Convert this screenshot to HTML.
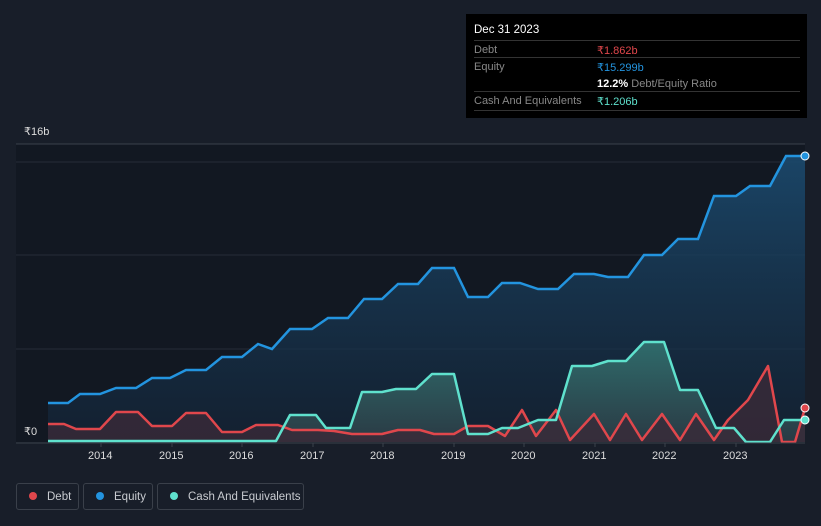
<!DOCTYPE html>
<html><head><style>
body{margin:0;width:821px;height:526px;background:#181e29;font-family:"Liberation Sans",sans-serif;overflow:hidden;position:relative}
.tip{position:absolute;left:466px;top:14px;width:341px;height:104px;background:#000;font-size:11px;color:#888}
.row{position:absolute;left:8px;width:326px;border-top:1px solid #333}
.lg{position:absolute;top:483px;height:27px;border:1px solid #3a404a;border-radius:3px;color:#c8cbd0;font-size:11.5px;line-height:27px;box-sizing:border-box}
.lg i{display:inline-block;width:8px;height:8px;border-radius:50%;margin:0 10px 0 12px}
.ax{position:absolute;top:450px;color:#ddd;font-size:11px}
</style></head><body>
<svg width="821" height="526" style="position:absolute;left:0;top:0">
<defs>
<linearGradient id="ge" x1="0" y1="0" x2="0" y2="1"><stop offset="0" stop-color="#1b4a6e" stop-opacity=".9"/><stop offset="1" stop-color="#14263a" stop-opacity=".6"/></linearGradient>
<linearGradient id="gc" x1="0" y1="0" x2="0" y2="1"><stop offset="0" stop-color="#2f6b6b"/><stop offset="1" stop-color="#2a3a44"/></linearGradient>
</defs>
<rect x="16" y="144" width="789" height="298" fill="#121822"/>
<line x1="16" y1="144" x2="805" y2="144" stroke="#3a414c"/>
<line x1="16" y1="162" x2="805" y2="162" stroke="#262d38"/>
<line x1="16" y1="255" x2="805" y2="255" stroke="#262d38"/>
<line x1="16" y1="349" x2="805" y2="349" stroke="#262d38"/>
<path fill="url(#ge)" d="M48,403 L68,403 80,394 100,394 116,388 136,388 152,378 170,378 186,370 206,370 222,357 242,357 258,344 272,349 290,329 312,329 328,318 348,318 364,299 382,299 398,284 418,284 432,268 454,268 468,297 488,297 502,283 520,283 538,289 558,289 574,274 594,274 608,277 628,277 644,255 662,255 678,239 698,239 714,196 736,196 750,186 770,186 786,156 805,156 L805,442 L48,442Z"/>
<path fill="url(#gc)" d="M48,441 L276,441 290,415 316,415 326,428 350,428 362,392 382,392 396,389 416,389 432,374 454,374 468,434 488,434 502,428 518,428 538,420 556,420 572,366 592,366 608,361 626,361 644,342 664,342 680,390 698,390 716,428 734,428 746,442 770,442 784,420 805,420 L805,442 48,442Z"/>
<path fill="#3a2a38" opacity=".8" d="M48,424 L64,424 76,429 100,429 116,412 138,412 152,426 172,426 186,413 206,413 222,432 242,432 256,425 278,425 292,430 318,430 334,431 352,434 382,434 398,430 420,430 434,434 454,434 468,426 488,426 505,436 522,410 536,436 556,410 570,440 594,414 610,440 626,414 642,440 662,414 680,440 696,414 714,440 728,420 748,400 768,366 782,442 795,442 805,408 L805,442 48,442Z"/>
<path fill="none" stroke="#2394df" stroke-width="2.5" d="M48,403 L68,403 80,394 100,394 116,388 136,388 152,378 170,378 186,370 206,370 222,357 242,357 258,344 272,349 290,329 312,329 328,318 348,318 364,299 382,299 398,284 418,284 432,268 454,268 468,297 488,297 502,283 520,283 538,289 558,289 574,274 594,274 608,277 628,277 644,255 662,255 678,239 698,239 714,196 736,196 750,186 770,186 786,156 805,156"/>
<path fill="none" stroke="#e0474c" stroke-width="2.5" stroke-linejoin="round" d="M48,424 L64,424 76,429 100,429 116,412 138,412 152,426 172,426 186,413 206,413 222,432 242,432 256,425 278,425 292,430 318,430 334,431 352,434 382,434 398,430 420,430 434,434 454,434 468,426 488,426 505,436 522,410 536,436 556,410 570,440 594,414 610,440 626,414 642,440 662,414 680,440 696,414 714,440 728,420 748,400 768,366 782,442 795,442 805,408"/>
<path fill="none" stroke="#5fe1cd" stroke-width="2.5" stroke-linejoin="round" d="M48,441 L276,441 290,415 316,415 326,428 350,428 362,392 382,392 396,389 416,389 432,374 454,374 468,434 488,434 502,428 518,428 538,420 556,420 572,366 592,366 608,361 626,361 644,342 664,342 680,390 698,390 716,428 734,428 746,442 770,442 784,420 805,420"/>
<line x1="16" y1="443" x2="805" y2="443" stroke="#3a414c"/>
<g stroke="#3a414c"><line x1="101" y1="443" x2="101" y2="447"/><line x1="172" y1="443" x2="172" y2="447"/><line x1="242" y1="443" x2="242" y2="447"/><line x1="313" y1="443" x2="313" y2="447"/><line x1="383" y1="443" x2="383" y2="447"/><line x1="454" y1="443" x2="454" y2="447"/><line x1="524" y1="443" x2="524" y2="447"/><line x1="595" y1="443" x2="595" y2="447"/><line x1="665" y1="443" x2="665" y2="447"/><line x1="736" y1="443" x2="736" y2="447"/></g>
<circle cx="805" cy="156" r="4" fill="#2394df" stroke="#fff" stroke-width="1"/>
<circle cx="805" cy="408" r="4" fill="#e0474c" stroke="#fff" stroke-width="1"/>
<circle cx="805" cy="420" r="4" fill="#5fe1cd" stroke="#fff" stroke-width="1"/>
</svg>
<div style="position:absolute;left:24px;top:125px;color:#ddd;font-size:11px">₹16b</div>
<div style="position:absolute;left:24px;top:425px;color:#ddd;font-size:11px">₹0</div>
<div class="ax" style="left:88px">2014</div><div class="ax" style="left:159px">2015</div><div class="ax" style="left:229px">2016</div><div class="ax" style="left:300px">2017</div><div class="ax" style="left:370px">2018</div><div class="ax" style="left:441px">2019</div><div class="ax" style="left:511px">2020</div><div class="ax" style="left:582px">2021</div><div class="ax" style="left:652px">2022</div><div class="ax" style="left:723px">2023</div>
<div class="tip">
<div style="position:absolute;left:8px;top:10px;color:#fff;font-size:11.5px">Dec 31 2023</div>
<div class="row" style="top:26px;height:17px"><span style="position:absolute;left:0;top:3px">Debt</span><span style="position:absolute;left:123px;top:3px;color:#e0474c">₹1.862b</span></div>
<div class="row" style="top:43px;height:17px"><span style="position:absolute;left:0;top:3px">Equity</span><span style="position:absolute;left:123px;top:3px;color:#2394df">₹15.299b</span><span style="position:absolute;left:123px;top:20px"><b style="color:#fff">12.2%</b> Debt/Equity Ratio</span></div>
<div class="row" style="top:77px;height:18px;border-bottom:1px solid #333"><span style="position:absolute;left:0;top:3px">Cash And Equivalents</span><span style="position:absolute;left:123px;top:3px;color:#5fe1cd">₹1.206b</span></div>
</div>
<div class="lg" style="left:16px;width:63px"><i style="background:#e0474c"></i>Debt</div>
<div class="lg" style="left:83px;width:70px"><i style="background:#2394df"></i>Equity</div>
<div class="lg" style="left:157px;width:147px"><i style="background:#5fe1cd"></i>Cash And Equivalents</div>
</body></html>
